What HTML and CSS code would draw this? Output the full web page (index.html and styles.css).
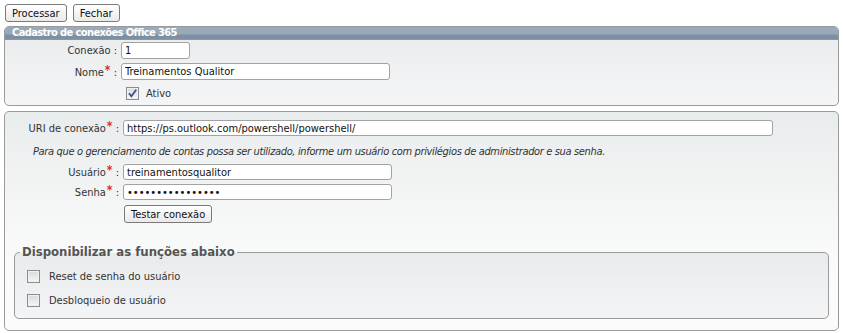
FILE: index.html
```html
<!DOCTYPE html>
<html lang="pt-BR">
<head>
  <meta charset="UTF-8">
  <title>Cadastro de conexões Office 365</title>
  <link rel="stylesheet" href="styles.css">
</head>
<body>
  <div class="toolbar">
    <button type="button" class="btn">Processar</button>
    <button type="button" class="btn">Fechar</button>
  </div>

  <div class="panel">
    <div class="panel-title">Cadastro de conexões Office 365</div>
    <div class="panel-body form-main">
      <div class="row">
        <label class="lbl" for="conexao">Conexão :</label>
        <input type="text" class="field field-sm" id="conexao" value="1">
      </div>
      <div class="row">
        <label class="lbl" for="nome">Nome<span class="req">*</span> :</label>
        <input type="text" class="field field-md" id="nome" value="Treinamentos Qualitor">
      </div>
      <div class="row">
        <span class="lbl"></span>
        <label class="check-item check-ativo">
          <span class="box">
            <svg width="11" height="11" viewBox="0 0 11 11"><path d="M2 5.2 L4.4 8.3 L9.2 1.8" fill="none" stroke="#34508f" stroke-width="1.8"/></svg>
          </span>
          Ativo
        </label>
      </div>
    </div>
  </div>

  <div class="panel panel-light">
    <div class="panel-body form-conn">
      <div class="row">
        <label class="lbl" for="uri">URI de conexão<span class="req">*</span> :</label>
        <input type="text" class="field field-lg" id="uri" value="https://ps.outlook.com/powershell/powershell/">
      </div>
      <p class="hint">Para que o gerenciamento de contas possa ser utilizado, informe um usuário com privilégios de administrador e sua senha.</p>
      <div class="row">
        <label class="lbl" for="usuario">Usuário<span class="req">*</span> :</label>
        <input type="text" class="field field-md" id="usuario" value="treinamentosqualitor">
      </div>
      <div class="row">
        <label class="lbl" for="senha">Senha<span class="req">*</span> :</label>
        <input type="password" class="field field-md" id="senha" value="qualitor12345678">
      </div>
      <div class="row row-btn">
        <span class="lbl"></span>
        <button type="button" class="btn">Testar conexão</button>
      </div>

      <fieldset class="functions">
        <legend>Disponibilizar as funções abaixo</legend>
        <label class="check-item"><span class="box"></span>Reset de senha do usuário</label>
        <label class="check-item"><span class="box"></span>Desbloqueio de usuário</label>
      </fieldset>
    </div>
  </div>
</body>
</html>
```
FILE: styles.css
```css
* {
  margin: 0;
  padding: 0;
  box-sizing: border-box;
}

body {
  font-family: "DejaVu Sans Condensed", "DejaVu Sans", sans-serif;
  font-size: 11px;
  color: #333;
  background-color: #ffffff;
  margin: 4px 4px 0 4px;
}

.toolbar {
  display: flex;
  gap: 6px;
  padding-left: 1px;
  margin-bottom: 4px;
}

.btn {
  font-family: inherit;
  font-size: 11px;
  color: #111;
  height: 18px;
  padding: 0 6px;
  border: 1px solid #7a7a7a;
  border-radius: 3px;
  background: linear-gradient(#ffffff, #e9e9e9);
  cursor: pointer;
}

.panel {
  border: 1px solid #9a9a9a;
  border-radius: 5px;
  background: linear-gradient(#e8ebec, #f4f5f6);
  overflow: hidden;
  margin-bottom: 5px;
}

.panel-light {
  background: linear-gradient(#e9eced 0px, #f6f7f7 110px, #fbfbfb 160px, #fbfbfb);
}

.panel-title {
  height: 14px;
  line-height: 14px;
  padding-left: 7px;
  color: #ffffff;
  font-weight: bold;
  letter-spacing: -0.6px;
  background: linear-gradient(#9babbb 0, #97a8b8 8px, #7e90a2 9px, #7c8ea0 12px, #8a9aac 14px);
  margin-top: -1px;
  border-bottom: 1px solid #8898a8;
}

.panel-body {
  padding: 2px 0 4px 0;
}

.row {
  display: flex;
  align-items: center;
  height: 17px;
  margin-bottom: 4px;
}

.row:last-child {
  margin-bottom: 0;
}

.lbl {
  flex: 0 0 auto;
  text-align: right;
  padding-right: 4px;
  white-space: nowrap;
}

.form-main .lbl {
  width: 116px;
}

.form-conn {
  padding: 8px 0 11px 0;
}

.form-conn .lbl {
  width: 118px;
}

.form-conn .row {
  height: 16px;
}

.req {
  color: #e8262a;
  font-size: 12px;
  font-weight: bold;
  position: relative;
  top: -2px;
  padding-left: 1px;
}

.field {
  font-family: inherit;
  font-size: 11px;
  color: #111;
  height: 100%;
  padding: 0 3px;
  border: 1px solid #a2a2a2;
  border-radius: 3px;
  background: #ffffff;
  outline: none;
}

.field-sm { width: 69px; }
.field-md { width: 269px; }
.field-lg { width: 650px; }

.check-item {
  display: flex;
  align-items: center;
  gap: 7px;
  color: #333;
  line-height: 13px;
}

.check-ativo {
  margin-left: 5px;
  margin-top: 2px;
}

.box {
  display: flex;
  align-items: center;
  justify-content: center;
  width: 13px;
  height: 13px;
  border: 1px solid #8c8c8c;
  background: linear-gradient(#d9d9d9, #f7f7f7);
  box-shadow: inset 0 0 0 1px #f0f0f0;
}

.hint {
  font-style: italic;
  letter-spacing: -0.35px;
  color: #333;
  margin: 8px 0 5px 28px;
  line-height: 15px;
}

.row-btn {
  height: 18px;
  margin-top: 6px;
}

.row-btn .btn {
  margin-left: 1px;
}

.functions {
  margin: 23px 9px 0 9px;
  border: 1px solid #9a9a9a;
  border-radius: 5px;
  background: linear-gradient(#e8ebec, #f3f4f5);
  padding: 11px 0 11px 0;
  display: flex;
  flex-direction: column;
  gap: 11px;
}

.functions legend {
  font-size: 13px;
  line-height: 14px;
  font-weight: bold;
  color: #555;
  margin-left: 5px;
  padding: 0 2px;
}

.functions .check-item {
  gap: 9px;
  margin-left: 12px;
}
```
